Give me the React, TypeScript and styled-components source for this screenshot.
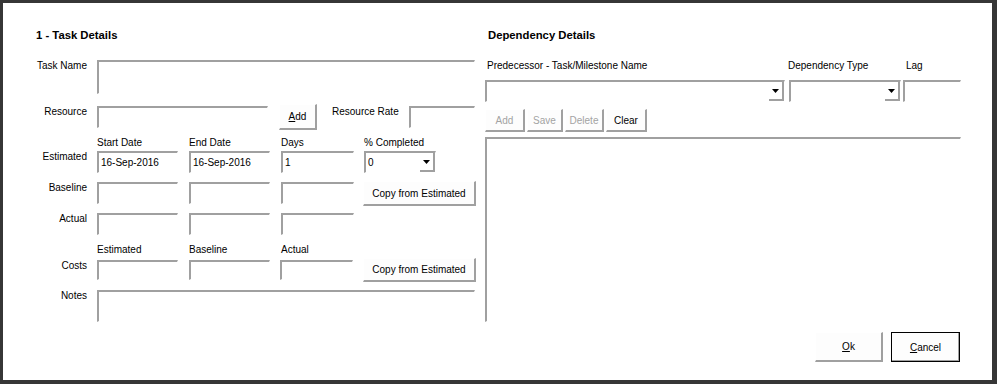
import React from "react";
import styled, { createGlobalStyle, css } from "styled-components";

const GlobalStyle = createGlobalStyle`
  html, body {
    margin: 0;
    padding: 0;
    background: #ffffff;
  }
  body {
    font-family: "Liberation Sans", Arial, sans-serif;
    font-size: 10px;
    color: #000;
  }
`;

const Frame = styled.div`
  width: 997px;
  height: 384px;
  box-sizing: border-box;
  border-style: solid;
  border-color: #363636;
  border-width: 3px 5px 4px 3px;
  background: #ffffff;
  display: flex;
`;

const LeftPanel = styled.section`
  width: 482px;
  box-sizing: border-box;
  padding: 26px 0 0 33px;
  display: flex;
  flex-direction: column;
`;

const RightPanel = styled.section`
  width: 476px;
  box-sizing: border-box;
  padding-top: 26px;
  display: flex;
  flex-direction: column;
`;

const SectionTitle = styled.h2<{ $indent?: number }>`
  margin: 0;
  padding-left: ${props => props.$indent || 0}px;
  font-size: 11.3px;
  font-weight: bold;
  line-height: 13px;
  height: 13px;
  white-space: nowrap;
`;

const Row = styled.div<{ $mt: number; $h: number; $end?: boolean }>`
  display: flex;
  align-items: flex-start;
  margin-top: ${props => props.$mt}px;
  height: ${props => props.$h}px;
  ${props =>
    props.$end &&
    css`
      justify-content: flex-end;
      padding-right: 1px;
    `}
`;

const RowLabel = styled.div`
  width: 51px;
  margin-right: 10px;
  flex-shrink: 0;
  text-align: right;
  line-height: 12px;
  white-space: nowrap;
`;

const ColHead = styled.div<{ $w?: number; $ml?: number }>`
  ${props => props.$w && `width: ${props.$w}px;`}
  margin-left: ${props => props.$ml || 0}px;
  flex-shrink: 0;
  line-height: 12px;
  white-space: nowrap;
`;

// sunken text box: only the top and left edges show
const Field = styled.div<{ $w: number; $ml?: number; $h?: number }>`
  width: ${props => props.$w}px;
  height: ${props => (props.$h ? `${props.$h}px` : "100%")};
  margin-left: ${props => props.$ml || 0}px;
  flex-shrink: 0;
  box-sizing: border-box;
  border-top: 2px solid #a0a0a0;
  border-left: 2px solid #a0a0a0;
  border-right: 1px solid #ffffff;
  border-bottom: 1px solid #ffffff;
  padding-left: 2px;
  display: flex;
  align-items: center;
  background: #ffffff;
  white-space: nowrap;
`;

const ComboBox = styled(Field)`
  padding-right: 0;
  justify-content: space-between;
  align-items: stretch;
`;

const ComboValue = styled.span`
  display: flex;
  align-items: center;
`;

const ComboArrow = styled.span`
  width: 15px;
  box-sizing: border-box;
  border-right: 2px solid #a0a0a0;
  border-bottom: 2px solid #a0a0a0;
  display: flex;
  align-items: center;
  justify-content: center;
  background: #ffffff;
`;

const Button = styled.button<{
  $w: number;
  $h: number;
  $ml?: number;
  $mt?: number;
  $default?: boolean;
}>`
  font: inherit;
  font-size: 10px;
  color: #000;
  width: ${props => props.$w}px;
  height: ${props => props.$h}px;
  margin: ${props => props.$mt || 0}px 0 0 ${props => props.$ml || 0}px;
  padding: 0;
  flex-shrink: 0;
  box-sizing: border-box;
  background: #fdfdfd;
  border-top: 1px solid #ffffff;
  border-left: 1px solid #ffffff;
  border-right: 2px solid #a0a0a0;
  border-bottom: 2px solid #a0a0a0;
  white-space: nowrap;
  cursor: pointer;

  &:disabled {
    color: #a3a3a3;
    cursor: default;
  }

  ${props =>
    props.$default &&
    css`
      border: 1px solid #000;
      box-shadow: inset -1px -1px 0 #a0a0a0;
    `}
`;

const Arrow = () => (
  <svg width="7" height="4" viewBox="0 0 7 4">
    <polygon points="0,0 7,0 3.5,4" fill="#000" />
  </svg>
);

function Combo(props: { w: number; ml?: number; value?: string }) {
  return (
    <ComboBox $w={props.w} $ml={props.ml}>
      <ComboValue>{props.value}</ComboValue>
      <ComboArrow>
        <Arrow />
      </ComboArrow>
    </ComboBox>
  );
}

function App() {
  return (
    <>
      <GlobalStyle />
      <Frame>
        <LeftPanel>
          <SectionTitle>1 - Task Details</SectionTitle>

          <Row $mt={18} $h={34}>
            <RowLabel>Task Name</RowLabel>
            <Field $w={378} />
          </Row>

          <Row $mt={12} $h={22}>
            <RowLabel>Resource</RowLabel>
            <Field $w={171} />
            <Button $w={38} $h={26} $ml={11} $mt={-2}>
              <u>A</u>dd
            </Button>
            <ColHead $w={77} $ml={15}>
              Resource Rate
            </ColHead>
            <Field $w={66} />
          </Row>

          <Row $mt={9} $h={12}>
            <RowLabel />
            <ColHead $w={92}>Start Date</ColHead>
            <ColHead $w={92}>End Date</ColHead>
            <ColHead $w={83}>Days</ColHead>
            <ColHead>% Completed</ColHead>
          </Row>

          <Row $mt={2} $h={22}>
            <RowLabel>Estimated</RowLabel>
            <Field $w={81}>16-Sep-2016</Field>
            <Field $w={81} $ml={11}>
              16-Sep-2016
            </Field>
            <Field $w={73} $ml={11}>
              1
            </Field>
            <Combo w={72} ml={10} value="0" />
          </Row>

          <Row $mt={9} $h={22}>
            <RowLabel>Baseline</RowLabel>
            <Field $w={81} />
            <Field $w={81} $ml={11} />
            <Field $w={73} $ml={11} />
            <Button $w={113} $h={25} $ml={9} $mt={-1}>
              Copy from Estimated
            </Button>
          </Row>

          <Row $mt={9} $h={22}>
            <RowLabel>Actual</RowLabel>
            <Field $w={81} />
            <Field $w={81} $ml={11} />
            <Field $w={73} $ml={11} />
          </Row>

          <Row $mt={9} $h={12}>
            <RowLabel />
            <ColHead $w={92}>Estimated</ColHead>
            <ColHead $w={92}>Baseline</ColHead>
            <ColHead>Actual</ColHead>
          </Row>

          <Row $mt={4} $h={20}>
            <RowLabel>Costs</RowLabel>
            <Field $w={81} />
            <Field $w={81} $ml={11} />
            <Field $w={73} $ml={10} />
            <Button $w={113} $h={24} $ml={10} $mt={-2}>
              Copy from Estimated
            </Button>
          </Row>

          <Row $mt={10} $h={32}>
            <RowLabel>Notes</RowLabel>
            <Field $w={378} />
          </Row>
        </LeftPanel>

        <RightPanel>
          <SectionTitle $indent={3}>Dependency Details</SectionTitle>

          <Row $mt={18} $h={12}>
            <ColHead $w={301} $ml={2}>
              Predecessor - Task/Milestone Name
            </ColHead>
            <ColHead $w={118}>Dependency Type</ColHead>
            <ColHead>Lag</ColHead>
          </Row>

          <Row $mt={8} $h={22}>
            <Combo w={300} />
            <Combo w={112} ml={4} />
            <Field $w={58} $ml={2} />
          </Row>

          <Row $mt={7} $h={23}>
            <Button $w={40} $h={23} disabled>
              Add
            </Button>
            <Button $w={36} $h={23} $ml={2} disabled>
              Save
            </Button>
            <Button $w={39} $h={23} $ml={2} disabled>
              Delete
            </Button>
            <Button $w={41} $h={23} $ml={2}>
              Clear
            </Button>
          </Row>

          <Row $mt={5} $h={185}>
            <Field $w={476} />
          </Row>

          <Row $mt={10} $h={30} $end>
            <Button $w={68} $h={30}>
              <u>O</u>k
            </Button>
            <Button $w={69} $h={30} $ml={8} $default>
              <u>C</u>ancel
            </Button>
          </Row>
        </RightPanel>
      </Frame>
    </>
  );
}

export default App;
